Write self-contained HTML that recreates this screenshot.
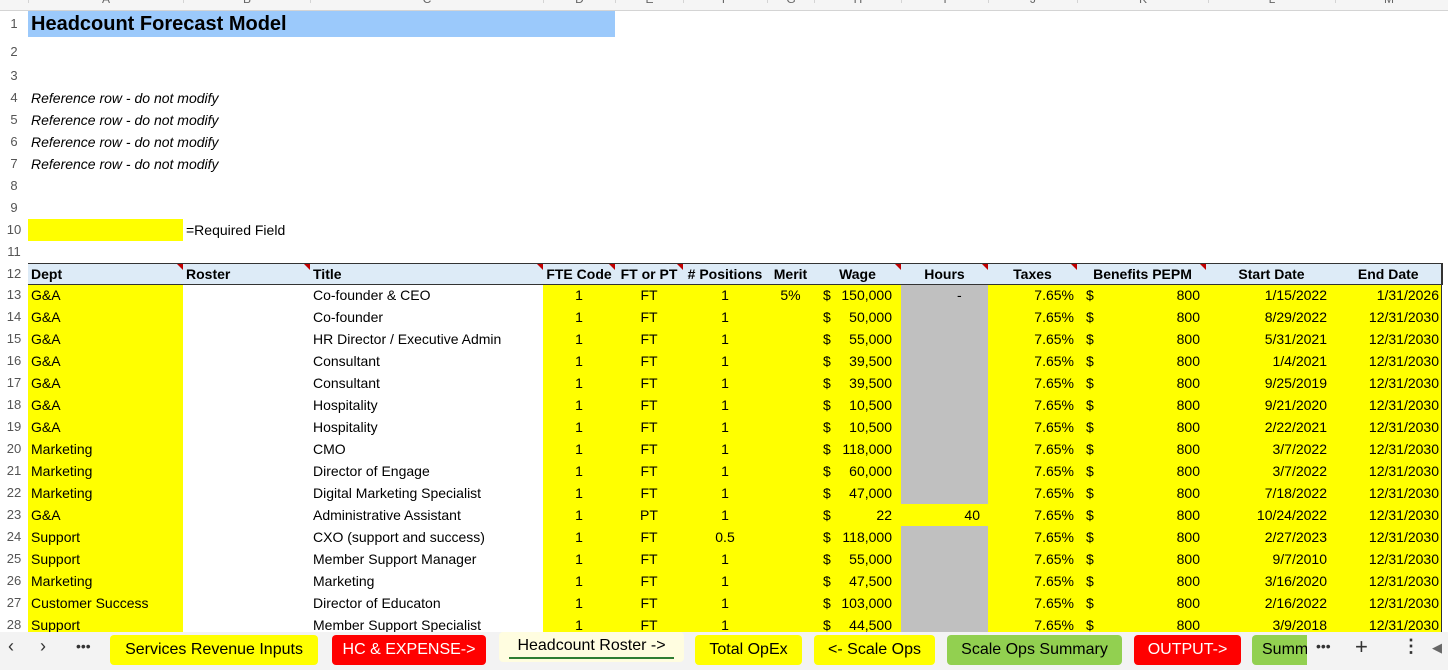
<!DOCTYPE html>
<html><head><meta charset="utf-8"><style>
*{margin:0;padding:0;box-sizing:border-box}
body{width:1448px;height:670px;overflow:hidden;background:#fff;font-family:"Liberation Sans",sans-serif;font-size:14px;color:#000;position:relative}
#ch{position:absolute;left:0;top:0;width:1448px;height:11px;background:#f5f5f5;border-bottom:1px solid #d4d4d4;overflow:hidden}
#ch span{position:absolute;top:-8px;font-size:12px;color:#666;border-left:1px solid #d4d4d4;height:11px;text-align:center}
table{position:absolute;left:0;top:11px;border-collapse:collapse;table-layout:fixed}
td{height:22px;padding:0 3px;white-space:nowrap;overflow:visible;line-height:20px}
td.rn{color:#555;text-align:center;padding:0;font-size:13px;background:#fff}
.y{background:#ffff00}.g{background:#c0c0c0}
.c{text-align:center}.r{text-align:right}
.hd td{background:#ddebf7;font-weight:bold;border-top:1px solid #333;border-bottom:1px solid #333;position:relative;height:21px}
.hd td.rn{background:#fff;border:none;font-weight:normal}
.tri{position:absolute;right:0;top:0;width:0;height:0;border-top:6px solid #c00000;border-left:6px solid transparent}
.dl{float:left;padding-left:6px}.dr{float:right;padding-right:6px}
.b .dr{padding-right:5px}
.it{font-style:italic}
.d{text-align:right;padding-right:8px}
#tabs{position:absolute;left:0;top:632px;width:1448px;height:38px;background:#f3f3f3}
.tab{position:absolute;top:3px;height:30px;line-height:30px;border-radius:4px;font-size:16px;text-align:center;white-space:nowrap;overflow:hidden}
.nav{position:absolute;top:4px;font-size:18px;color:#333}
</style></head><body>
<div id="ch">
<span style="left:28px;width:155px">A</span><span style="left:183px;width:127px">B</span><span style="left:310px;width:233px">C</span><span style="left:543px;width:72px">D</span><span style="left:615px;width:68px">E</span><span style="left:683px;width:84px">F</span><span style="left:767px;width:47px">G</span><span style="left:814px;width:87px">H</span><span style="left:901px;width:87px">I</span><span style="left:988px;width:89px">J</span><span style="left:1077px;width:131px">K</span><span style="left:1208px;width:127px">L</span><span style="left:1335px;width:107px">M</span>
</div>
<table>
<colgroup><col style="width:28px"><col style="width:155px"><col style="width:127px"><col style="width:233px"><col style="width:72px"><col style="width:68px"><col style="width:84px"><col style="width:47px"><col style="width:87px"><col style="width:87px"><col style="width:89px"><col style="width:131px"><col style="width:127px"><col style="width:107px"></colgroup>
<tr style="height:26px"><td class="rn">1</td><td colspan="4" style="background:#9bc9fb;font-weight:bold;font-size:20px;height:26px;line-height:26px">Headcount Forecast Model</td><td colspan="9"></td></tr>
<tr><td class="rn" style="height:28px;vertical-align:bottom;padding-bottom:3px">2</td><td colspan="13"></td></tr>
<tr><td class="rn">3</td><td colspan="13"></td></tr>
<tr><td class="rn">4</td><td class="it" colspan="3">Reference row - do not modify</td><td colspan="10"></td></tr>
<tr><td class="rn">5</td><td class="it" colspan="3">Reference row - do not modify</td><td colspan="10"></td></tr>
<tr><td class="rn">6</td><td class="it" colspan="3">Reference row - do not modify</td><td colspan="10"></td></tr>
<tr><td class="rn">7</td><td class="it" colspan="3">Reference row - do not modify</td><td colspan="10"></td></tr>
<tr><td class="rn">8</td><td colspan="13"></td></tr>
<tr><td class="rn">9</td><td colspan="13"></td></tr>
<tr><td class="rn">10</td><td class="y"></td><td colspan="12">=Required Field</td></tr>
<tr><td class="rn">11</td><td colspan="13"></td></tr>
<tr class="hd"><td class="rn">12</td><td>Dept<i class="tri"></i></td><td>Roster<i class="tri"></i></td><td>Title<i class="tri"></i></td><td class="c">FTE Code<i class="tri"></i></td><td class="c">FT or PT<i class="tri"></i></td><td class="c"># Positions</td><td class="c">Merit</td><td class="c">Wage<i class="tri"></i></td><td class="c">Hours<i class="tri"></i></td><td class="c">Taxes<i class="tri"></i></td><td class="c">Benefits PEPM<i class="tri" style="right:2px"></i></td><td class="c">Start Date</td><td class="c" style="border-right:1px solid #333">End Date</td></tr>
<tr><td class="rn">13</td><td class="y">G&amp;A</td><td></td><td>Co-founder &amp; CEO</td><td class="y c">1</td><td class="y c">FT</td><td class="y c">1</td><td class="y c">5%</td><td class="y"><span class="dl">$</span><span class="dr">150,000</span></td><td class="g r">-&nbsp;&nbsp;&nbsp;&nbsp;&nbsp;&nbsp;</td><td class="y r">7.65%</td><td class="y b"><span class="dl">$</span><span class="dr">800</span></td><td class="y d">1/15/2022</td><td class="y r">1/31/2026</td></tr>
<tr><td class="rn">14</td><td class="y">G&amp;A</td><td></td><td>Co-founder</td><td class="y c">1</td><td class="y c">FT</td><td class="y c">1</td><td class="y"></td><td class="y"><span class="dl">$</span><span class="dr">50,000</span></td><td class="g"></td><td class="y r">7.65%</td><td class="y b"><span class="dl">$</span><span class="dr">800</span></td><td class="y d">8/29/2022</td><td class="y r">12/31/2030</td></tr>
<tr><td class="rn">15</td><td class="y">G&amp;A</td><td></td><td>HR Director / Executive Admin</td><td class="y c">1</td><td class="y c">FT</td><td class="y c">1</td><td class="y"></td><td class="y"><span class="dl">$</span><span class="dr">55,000</span></td><td class="g"></td><td class="y r">7.65%</td><td class="y b"><span class="dl">$</span><span class="dr">800</span></td><td class="y d">5/31/2021</td><td class="y r">12/31/2030</td></tr>
<tr><td class="rn">16</td><td class="y">G&amp;A</td><td></td><td>Consultant</td><td class="y c">1</td><td class="y c">FT</td><td class="y c">1</td><td class="y"></td><td class="y"><span class="dl">$</span><span class="dr">39,500</span></td><td class="g"></td><td class="y r">7.65%</td><td class="y b"><span class="dl">$</span><span class="dr">800</span></td><td class="y d">1/4/2021</td><td class="y r">12/31/2030</td></tr>
<tr><td class="rn">17</td><td class="y">G&amp;A</td><td></td><td>Consultant</td><td class="y c">1</td><td class="y c">FT</td><td class="y c">1</td><td class="y"></td><td class="y"><span class="dl">$</span><span class="dr">39,500</span></td><td class="g"></td><td class="y r">7.65%</td><td class="y b"><span class="dl">$</span><span class="dr">800</span></td><td class="y d">9/25/2019</td><td class="y r">12/31/2030</td></tr>
<tr><td class="rn">18</td><td class="y">G&amp;A</td><td></td><td>Hospitality</td><td class="y c">1</td><td class="y c">FT</td><td class="y c">1</td><td class="y"></td><td class="y"><span class="dl">$</span><span class="dr">10,500</span></td><td class="g"></td><td class="y r">7.65%</td><td class="y b"><span class="dl">$</span><span class="dr">800</span></td><td class="y d">9/21/2020</td><td class="y r">12/31/2030</td></tr>
<tr><td class="rn">19</td><td class="y">G&amp;A</td><td></td><td>Hospitality</td><td class="y c">1</td><td class="y c">FT</td><td class="y c">1</td><td class="y"></td><td class="y"><span class="dl">$</span><span class="dr">10,500</span></td><td class="g"></td><td class="y r">7.65%</td><td class="y b"><span class="dl">$</span><span class="dr">800</span></td><td class="y d">2/22/2021</td><td class="y r">12/31/2030</td></tr>
<tr><td class="rn">20</td><td class="y">Marketing</td><td></td><td>CMO</td><td class="y c">1</td><td class="y c">FT</td><td class="y c">1</td><td class="y"></td><td class="y"><span class="dl">$</span><span class="dr">118,000</span></td><td class="g"></td><td class="y r">7.65%</td><td class="y b"><span class="dl">$</span><span class="dr">800</span></td><td class="y d">3/7/2022</td><td class="y r">12/31/2030</td></tr>
<tr><td class="rn">21</td><td class="y">Marketing</td><td></td><td>Director of Engage</td><td class="y c">1</td><td class="y c">FT</td><td class="y c">1</td><td class="y"></td><td class="y"><span class="dl">$</span><span class="dr">60,000</span></td><td class="g"></td><td class="y r">7.65%</td><td class="y b"><span class="dl">$</span><span class="dr">800</span></td><td class="y d">3/7/2022</td><td class="y r">12/31/2030</td></tr>
<tr><td class="rn">22</td><td class="y">Marketing</td><td></td><td>Digital Marketing Specialist</td><td class="y c">1</td><td class="y c">FT</td><td class="y c">1</td><td class="y"></td><td class="y"><span class="dl">$</span><span class="dr">47,000</span></td><td class="g"></td><td class="y r">7.65%</td><td class="y b"><span class="dl">$</span><span class="dr">800</span></td><td class="y d">7/18/2022</td><td class="y r">12/31/2030</td></tr>
<tr><td class="rn">23</td><td class="y">G&amp;A</td><td></td><td>Administrative Assistant</td><td class="y c">1</td><td class="y c">PT</td><td class="y c">1</td><td class="y"></td><td class="y"><span class="dl">$</span><span class="dr">22</span></td><td class="y r" style="padding-right:8px">40</td><td class="y r">7.65%</td><td class="y b"><span class="dl">$</span><span class="dr">800</span></td><td class="y d">10/24/2022</td><td class="y r">12/31/2030</td></tr>
<tr><td class="rn">24</td><td class="y">Support</td><td></td><td>CXO (support and success)</td><td class="y c">1</td><td class="y c">FT</td><td class="y c">0.5</td><td class="y"></td><td class="y"><span class="dl">$</span><span class="dr">118,000</span></td><td class="g"></td><td class="y r">7.65%</td><td class="y b"><span class="dl">$</span><span class="dr">800</span></td><td class="y d">2/27/2023</td><td class="y r">12/31/2030</td></tr>
<tr><td class="rn">25</td><td class="y">Support</td><td></td><td>Member Support Manager</td><td class="y c">1</td><td class="y c">FT</td><td class="y c">1</td><td class="y"></td><td class="y"><span class="dl">$</span><span class="dr">55,000</span></td><td class="g"></td><td class="y r">7.65%</td><td class="y b"><span class="dl">$</span><span class="dr">800</span></td><td class="y d">9/7/2010</td><td class="y r">12/31/2030</td></tr>
<tr><td class="rn">26</td><td class="y">Marketing</td><td></td><td>Marketing</td><td class="y c">1</td><td class="y c">FT</td><td class="y c">1</td><td class="y"></td><td class="y"><span class="dl">$</span><span class="dr">47,500</span></td><td class="g"></td><td class="y r">7.65%</td><td class="y b"><span class="dl">$</span><span class="dr">800</span></td><td class="y d">3/16/2020</td><td class="y r">12/31/2030</td></tr>
<tr><td class="rn">27</td><td class="y">Customer Success</td><td></td><td>Director of Educaton</td><td class="y c">1</td><td class="y c">FT</td><td class="y c">1</td><td class="y"></td><td class="y"><span class="dl">$</span><span class="dr">103,000</span></td><td class="g"></td><td class="y r">7.65%</td><td class="y b"><span class="dl">$</span><span class="dr">800</span></td><td class="y d">2/16/2022</td><td class="y r">12/31/2030</td></tr>
<tr><td class="rn">28</td><td class="y">Support</td><td></td><td>Member Support Specialist</td><td class="y c">1</td><td class="y c">FT</td><td class="y c">1</td><td class="y"></td><td class="y"><span class="dl">$</span><span class="dr">44,500</span></td><td class="g"></td><td class="y r">7.65%</td><td class="y b"><span class="dl">$</span><span class="dr">800</span></td><td class="y d">3/9/2018</td><td class="y r">12/31/2030</td></tr>
</table>
<div style="position:absolute;left:1441px;top:263px;width:1px;height:370px;background:#333"></div>
<div id="tabs">
<span class="nav" style="left:8px">‹</span><span class="nav" style="left:40px">›</span><span class="nav" style="left:76px;font-size:14px;top:6px">•••</span>
<div class="tab" style="left:110px;width:208px;background:#ffff00">Services Revenue Inputs</div>
<div class="tab" style="left:332px;width:154px;background:#ff0000;color:#fff">HC &amp; EXPENSE-&gt;</div>
<div class="tab" style="left:499px;width:185px;background:#fffde0;top:0;height:30px;line-height:28px">Headcount Roster -&gt;<div style="position:absolute;left:10px;right:10px;bottom:3px;height:2px;background:#2e7d32"></div></div>
<div class="tab" style="left:695px;width:107px;background:#ffff00">Total OpEx</div>
<div class="tab" style="left:814px;width:121px;background:#ffff00">&lt;- Scale Ops</div>
<div class="tab" style="left:947px;width:175px;background:#92d050">Scale Ops Summary</div>
<div class="tab" style="left:1134px;width:107px;background:#ff0000;color:#fff">OUTPUT-&gt;</div>
<div class="tab" style="left:1252px;width:55px;background:#92d050;text-align:left;padding-left:10px;border-radius:4px 0 0 4px">Summ</div>
<span class="nav" style="left:1316px;font-size:14px;top:6px">•••</span>
<span class="nav" style="left:1355px;font-size:22px;top:2px">+</span>
<span class="nav" style="left:1402px;font-size:18px;font-weight:bold">⋮</span>
<span class="nav" style="left:1432px;font-size:13px;top:8px;color:#666">◀</span>
</div>
</body></html>
